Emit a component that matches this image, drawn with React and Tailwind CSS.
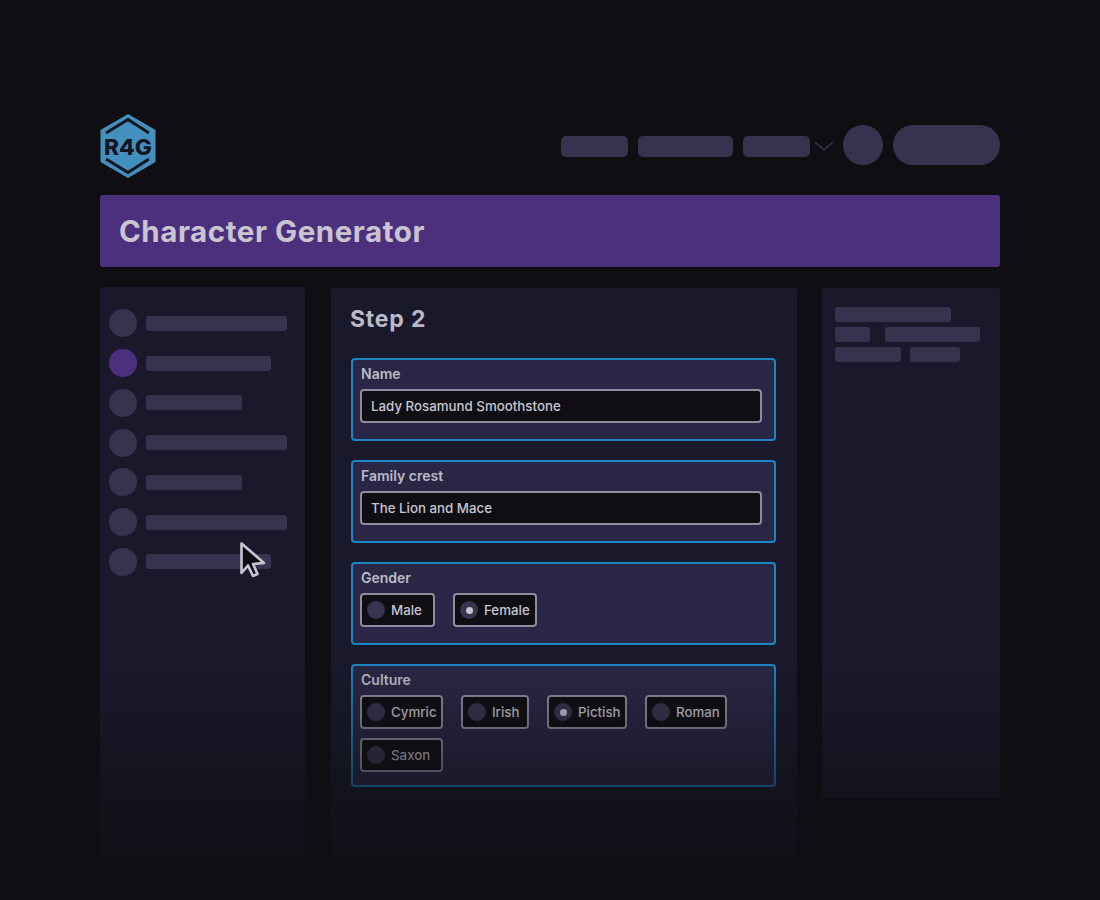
import React from 'react';

const sideBars = [
  { w: 'w-[141px]' },
  { w: 'w-[125px]', active: true },
  { w: 'w-[96px]' },
  { w: 'w-[141px]' },
  { w: 'w-[96px]' },
  { w: 'w-[141px]' },
  { w: 'w-[125px]' },
];

const Logo = () => (
  <svg width="56" height="64" viewBox="0 0 56 64" className="shrink-0">
    <polygon points="28,0 55.5,16 55.5,48 28,64 0.5,48 0.5,16" fill="#4390bf" />
    <polyline points="6,19 28,5.5 49,19" fill="none" stroke="#14161f" strokeWidth="3" />
    <polyline points="6,45 28,58.5 49,45" fill="none" stroke="#14161f" strokeWidth="3" />
    <text x="4" y="40.5" textLength="48" lengthAdjust="spacingAndGlyphs" fontFamily="Inter, sans-serif" fontWeight="800" fontSize="22" fill="#14161f">R4G</text>
  </svg>
);

const Cursor = () => (
  <svg width="30" height="38" viewBox="0 0 30 38" className="absolute left-[238px] top-[541px]">
    <path d="M3.5 2.5 L3.5 32 L10 24.5 L15 35 L19.5 33 L15 23 L26 22 Z" fill="#0e0e13" stroke="#c9c6d4" strokeWidth="2.6" strokeLinejoin="round" />
  </svg>
);

const Field = ({ label, children, h = 'h-[83px]' }) => (
  <div className={`${h} rounded-[4px] border-2 border-[#1a86c4] bg-[#2a2746] px-[7px] pt-[5px]`}>
    <div className="pl-[1px] text-[14px] leading-[18px] font-semibold text-[#bdbac8]">{label}</div>
    {children}
  </div>
);

const TextInput = ({ value }) => (
  <div className="mt-[6px] flex h-[34px] w-[402px] items-center rounded-[4px] border-2 border-[#8f8ca0] bg-[#0e0e13] pl-[9px] pt-[1px] text-[13.3px] font-medium text-[#c8c5d2]">
    {value}
  </div>
);

const Radio = ({ label, w, checked, dim }) => (
  <div className={`flex h-[34px] ${w} items-center gap-[6px] rounded-[4px] border-2 border-[#8f8ca0] bg-[#0e0e13] pl-[5px] text-[13.3px] font-medium ${dim ? 'text-[#bdbac8]' : 'text-[#c8c5d2]'}`}>
    <span className="flex h-[18px] w-[18px] items-center justify-center rounded-full bg-[#383550]">
      {checked && <span className="h-[7px] w-[7px] rounded-full bg-[#c8c5d2]" />}
    </span>
    <span className="pt-[1px]">{label}</span>
  </div>
);

export default function App() {
  return (
    <div className="relative h-[900px] overflow-hidden bg-[#0e0e13] px-[100px] pt-[114px] font-['Inter',sans-serif]">
      {/* Header */}
      <div className="flex h-[64px] items-start justify-between">
        <Logo />
        <div className="mt-[11px] flex items-center">
          <div className="mt-[2px] h-[21px] w-[67px] rounded-[5px] bg-[#36334f]" />
          <div className="ml-[10px] mt-[2px] h-[21px] w-[95px] rounded-[5px] bg-[#36334f]" />
          <div className="ml-[10px] mt-[2px] h-[21px] w-[67px] rounded-[5px] bg-[#36334f]" />
          <svg width="20" height="12" viewBox="0 0 20 12" className="ml-[4px] mt-[1px]">
            <polyline points="1,2 10,10 19,2" fill="none" stroke="#36334f" strokeWidth="1.6" />
          </svg>
          <div className="ml-[9px] h-[40px] w-[40px] rounded-full bg-[#36334f]" />
          <div className="ml-[10px] h-[40px] w-[107px] rounded-full bg-[#36334f]" />
        </div>
      </div>

      {/* Title banner */}
      <div className="mt-[17px] flex h-[72px] items-center rounded-[3px] bg-[#4c2f7d] pl-[19px]">
        <h1 className="text-[29.5px] font-bold tracking-[0.55px] text-[#c8c5d0]">Character Generator</h1>
      </div>

      {/* Columns */}
      <div className="mt-[20px] flex items-start">
        <aside className="h-[620px] w-[205px] rounded-[3px] bg-[#1a192c] px-[9px] pt-[22.3px]">
          <div className="flex flex-col gap-[11.75px]">
            {sideBars.map((b, i) => (
              <div key={i} className="flex items-center gap-[9px]">
                <div className={`h-[28px] w-[28px] rounded-full ${b.active ? 'bg-[#4c2f7d]' : 'bg-[#36334f]'}`} />
                <div className={`h-[15px] ${b.w} rounded-[3px] bg-[#36334f]`} />
              </div>
            ))}
          </div>
        </aside>

        <main className="ml-[26px] mt-[1px] h-[620px] w-[466px] rounded-[3px] bg-[#1a192c] px-[20px] pt-[16px]">
          <h2 className="-ml-[1px] text-[23px] leading-[30px] font-bold tracking-[0.8px] text-[#bdbac8]">Step 2</h2>
          <div className="mt-[24px] flex w-[425px] flex-col gap-[19px]">
            <Field label="Name"><TextInput value="Lady Rosamund Smoothstone" /></Field>
            <Field label="Family crest"><TextInput value="The Lion and Mace" /></Field>
            <Field label="Gender">
              <div className="mt-[6px] flex gap-[18px]">
                <Radio label="Male" w="w-[75px]" />
                <Radio label="Female" w="w-[84px]" checked />
              </div>
            </Field>
            <Field label="Culture" h="h-[123px]">
              <div className="mt-[6px] flex flex-wrap gap-x-[18px] gap-y-[9px]">
                <Radio label="Cymric" w="w-[83px]" />
                <Radio label="Irish" w="w-[68px]" />
                <Radio label="Pictish" w="w-[80px]" checked />
                <Radio label="Roman" w="w-[82px]" />
                <Radio label="Saxon" w="w-[83px]" dim />
              </div>
            </Field>
          </div>
        </main>

        <aside className="ml-[25px] mt-[1px] h-[510px] w-[178px] rounded-[3px] bg-[#1a192c] px-[13px] pt-[19px]">
          <div className="flex flex-col gap-[5px]">
            <div className="h-[15px] w-[116px] rounded-[3px] bg-[#36334f]" />
            <div className="flex gap-[15px]">
              <div className="h-[15px] w-[35px] rounded-[3px] bg-[#36334f]" />
              <div className="h-[15px] w-[95px] rounded-[3px] bg-[#36334f]" />
            </div>
            <div className="flex gap-[9px]">
              <div className="h-[15px] w-[66px] rounded-[3px] bg-[#36334f]" />
              <div className="h-[15px] w-[50px] rounded-[3px] bg-[#36334f]" />
            </div>
          </div>
        </aside>
      </div>

      <div className="pointer-events-none absolute inset-x-0 bottom-0 h-[240px] bg-gradient-to-b from-transparent to-[#0e0e13] to-95%" />
      <Cursor />
    </div>
  );
}
